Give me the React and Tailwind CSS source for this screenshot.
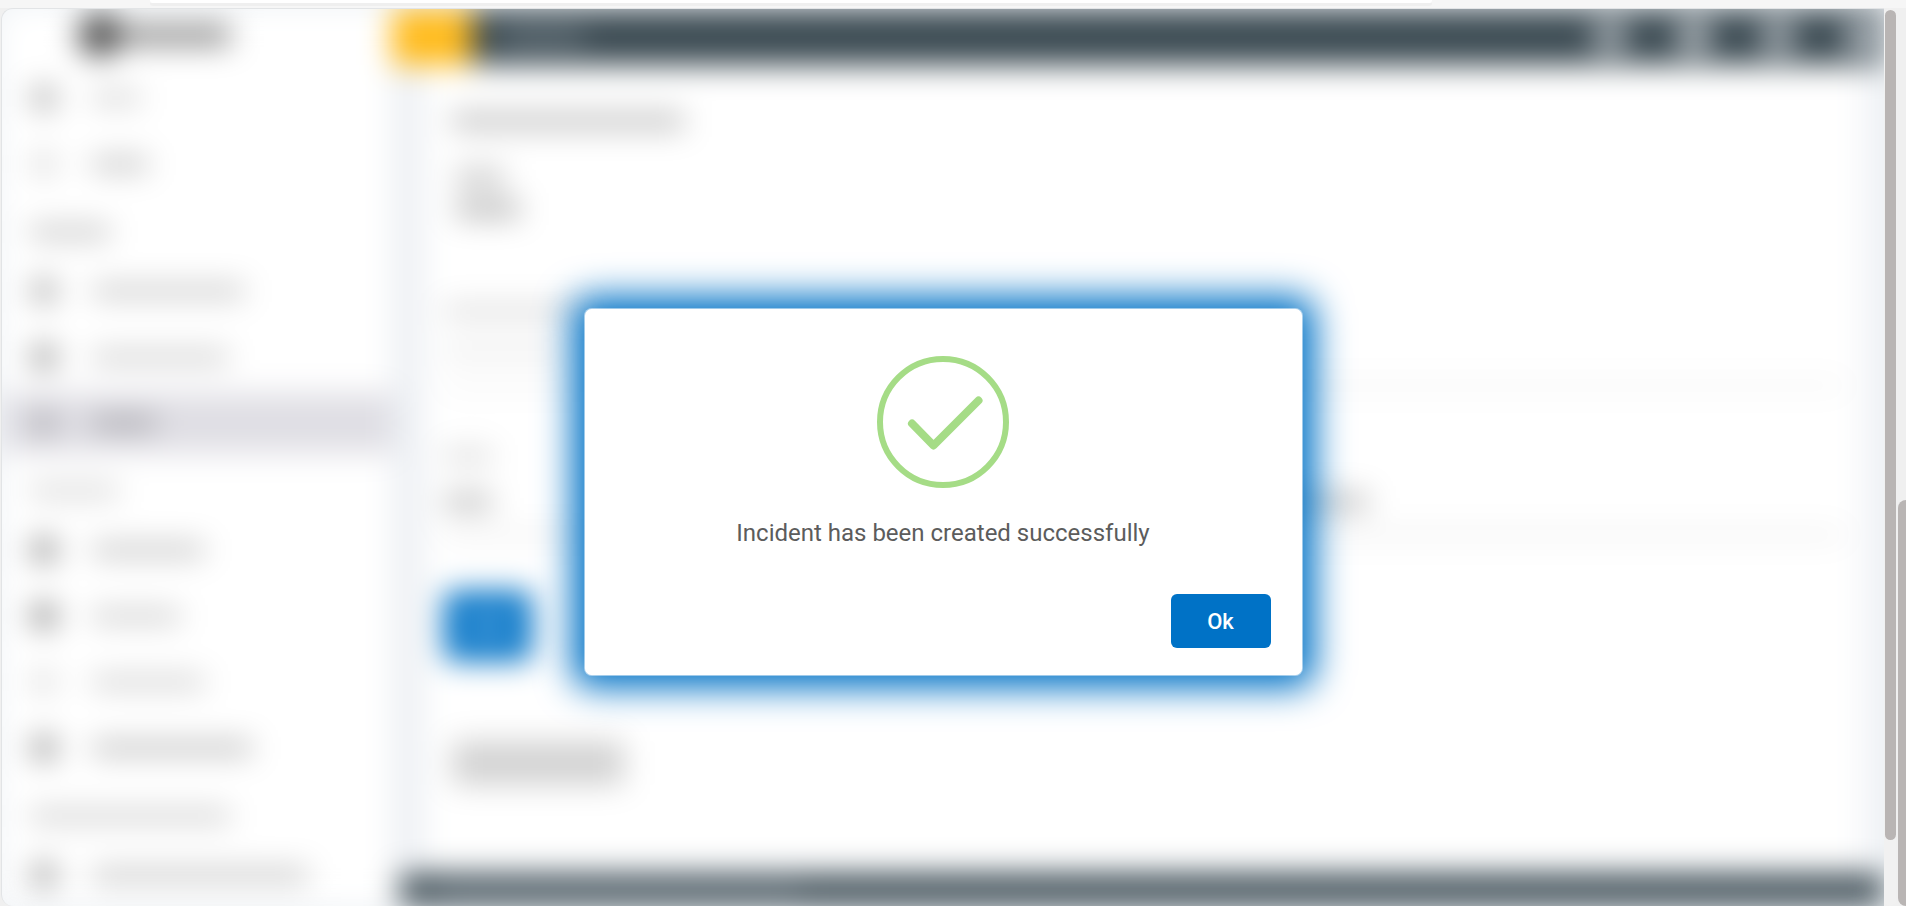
import clsx from 'clsx'

const navGroups = [
  {
    title: null,
    items: [
      { id: 'n1', width: 'w-12', icon: 'bg-[#b4b4b4]', bar: 'bg-[#cbcbcb]' },
      { id: 'n2', width: 'w-14', icon: 'bg-[#dedede]', bar: 'bg-[#b6b6b6]' },
    ],
  },
  {
    title: 'w-20 bg-[#bababa]',
    items: [
      { id: 'n3', width: 'w-38', icon: 'bg-[#b0b0b0]', bar: 'bg-[#bebebe]' },
      { id: 'n4', width: 'w-34', icon: 'bg-[#9e9e9e]', bar: 'bg-[#c4c4c4]' },
      { id: 'n5', width: 'w-16', icon: 'bg-[#b0afb5]', bar: 'bg-[#9b9aa0]', active: true },
    ],
  },
  {
    title: 'w-22 bg-[#cfcfcf]',
    items: [
      { id: 'n6', width: 'w-28', icon: 'bg-[#949494]', bar: 'bg-[#b8b8b8]' },
      { id: 'n7', width: 'w-22', icon: 'bg-[#8c8c8c]', bar: 'bg-[#c2c2c2]' },
      { id: 'n8', width: 'w-28', icon: 'bg-[#e0e0e0]', bar: 'bg-[#c8c8c8]' },
      { id: 'n9', width: 'w-40', icon: 'bg-[#9c9c9c]', bar: 'bg-[#b0b0b0]' },
    ],
  },
  {
    title: 'w-50 bg-[#c6c6c6]',
    items: [
      { id: 'n10', width: 'w-54', icon: 'bg-[#a4a4a4]', bar: 'bg-[#bababa]' },
    ],
  },
]

function NavItem({ item }) {
  return (
    <div className="py-[3px]">
      <a
        href={`#${item.id}`}
        tabIndex={-1}
        className={clsx('flex h-[60px] items-center pl-[30px]', item.active && 'bg-[#dfdee4]')}
      >
        <span className={clsx('h-6 w-6 rounded', item.icon)} />
        <span className={clsx('ml-9 h-3', item.width, item.bar)} />
      </a>
    </div>
  )
}

function Sidebar() {
  return (
    <nav className="flex w-[390px] shrink-0 flex-col overflow-hidden bg-white">
      <div className="flex h-13 shrink-0 items-center pl-19">
        <span className="h-11 w-11 rounded-full bg-[#505050]" />
        <span className="h-5 w-27 bg-[#888888]" />
      </div>
      <div className="pt-1">
        {navGroups.map((group, i) => (
          <div key={i}>
            {group.title && (
              <div className="flex h-[61px] items-center pt-2 pl-7">
                <span className={clsx('h-3', group.title)} />
              </div>
            )}
            {group.items.map((item) => (
              <NavItem key={item.id} item={item} />
            ))}
          </div>
        ))}
      </div>
    </nav>
  )
}

function TopBar() {
  return (
    <header className="flex h-14 shrink-0 items-center bg-[#3c4b53]">
      <span className="h-full w-20 bg-[#ffbb1c]" />
      <span className="ml-8 h-3 w-20 bg-[#76838b]" />
      <div className="ml-auto flex items-center gap-12 pr-1">
        <span className="h-9 w-9 rounded-full bg-[#a6aeb4]" />
        <span className="h-9 w-9 rounded-full bg-[#b4bbc0]" />
        <span className="h-9 w-9 rounded-full bg-[#a6aeb4]" />
        <span className="h-9 w-9 rounded-full bg-[#b0b7bd]" />
      </div>
    </header>
  )
}

function IncidentForm() {
  return (
    <main className="mr-5 ml-8 flex min-h-0 flex-1 flex-col items-start overflow-hidden bg-white px-5 pt-12">
      <span className="ml-2 h-4 w-58 bg-[#bcbcbc]" />
      <span className="mt-10 ml-3 h-4 w-12 bg-[#c2c2c2]" />
      <span className="mt-4 ml-3 h-4 w-16 bg-[#b0b0b0]" />
      <span className="mt-22 h-3 w-36 bg-[#d5d5d5]" />
      <span className="mt-7 h-3 w-32 bg-[#e8e8e8]" />
      <div className="mt-7 h-px w-full bg-[#999999]" />
      <span className="mt-16 h-3 w-12 bg-[#d2d2d2]" />
      <div className="mt-8 grid w-full grid-cols-2">
        <span className="h-4 w-12 bg-[#bcbcbc]" />
        <span className="h-4 w-56 bg-[#bcbcbc]" />
      </div>
      <div className="mt-6 h-px w-full bg-[#666666]" />
      <span className="mt-14 flex h-[70px] w-[88px] items-center justify-center rounded-lg bg-[#0072c6]">
        <span className="h-4 w-12 bg-[#6bade0]" />
      </span>
      <span className="mt-20 ml-2 h-11 w-43 rounded bg-[#d2d2d2]" />
    </main>
  )
}

function SuccessIcon() {
  return (
    <svg className="h-[132px] w-[132px]" viewBox="0 0 132 132" fill="none" stroke="#a5dc86" aria-hidden="true">
      <circle cx="66" cy="66" r="63" strokeWidth="6" />
      <path d="M35 67.5 56.5 89.5 101.5 44.5" strokeWidth="8" strokeLinecap="round" strokeLinejoin="round" />
    </svg>
  )
}

function SuccessDialog() {
  return (
    <div className="absolute inset-0 flex items-center justify-center pt-[68px]">
      <div
        role="dialog"
        aria-modal="true"
        aria-labelledby="dialog-message"
        className="flex w-full max-w-[719px] flex-col items-center rounded-lg border border-white/50 bg-white bg-clip-padding px-[31px] pt-[47px] pb-[27px] shadow-[0_0_36px_12px_#0072c6]"
      >
        <SuccessIcon />
        <p id="dialog-message" className="mt-[29px] text-[24px] leading-8 text-[#5c5c5c]">
          Incident has been created successfully
        </p>
        <button
          type="button"
          className="mt-[45px] h-[54px] w-[100px] self-end rounded-md bg-[#0072c6] pt-0.5 text-[22px] font-medium text-white"
        >
          Ok
        </button>
      </div>
    </div>
  )
}

export default function App() {
  return (
    <div className="flex h-screen flex-col overflow-hidden bg-[#f6f6f6] font-[Roboto,sans-serif]">
      {/* Bottom edge of the browser's address bar */}
      <div className="flex h-2 shrink-0 items-start pr-[474px] pl-[150px]">
        <div className="h-[3px] flex-1 rounded-b-2xl bg-white shadow-[0_3px_0_#efefef]" />
      </div>

      <div className="flex min-h-0 flex-1 bg-[#f0f0f0] pl-px">
        <div className="relative min-w-0 flex-1 overflow-hidden rounded-l-xl border-t border-l border-[#e2e4e6] bg-[#f1f4f7]">
          <div className="flex h-full bg-[#edf0f4] blur-[15px]" aria-hidden="true">
            <Sidebar />
            <div className="flex min-w-0 flex-1 flex-col">
              <TopBar />
              <IncidentForm />
              <footer className="mt-2 ml-2 flex h-8 shrink-0 items-center bg-[#3e4d55] pl-10">
                <span className="h-3 w-90 bg-[#5c6a73]" />
              </footer>
            </div>
          </div>
          <SuccessDialog />
        </div>

        {/* Page scrollbar */}
        <div className="w-3 shrink-0 rounded-full bg-[#f1f1f1] pt-0.5 pl-px">
          <div className="h-[92.6%] rounded-full bg-[#b9b5b4]" />
        </div>
        {/* Outer window scrollbar */}
        <div className="ml-0.5 flex w-2 shrink-0 flex-col justify-end">
          <div className="h-[45.2%] rounded-l-full bg-[#b9b5b4]" />
        </div>
      </div>
    </div>
  )
}
